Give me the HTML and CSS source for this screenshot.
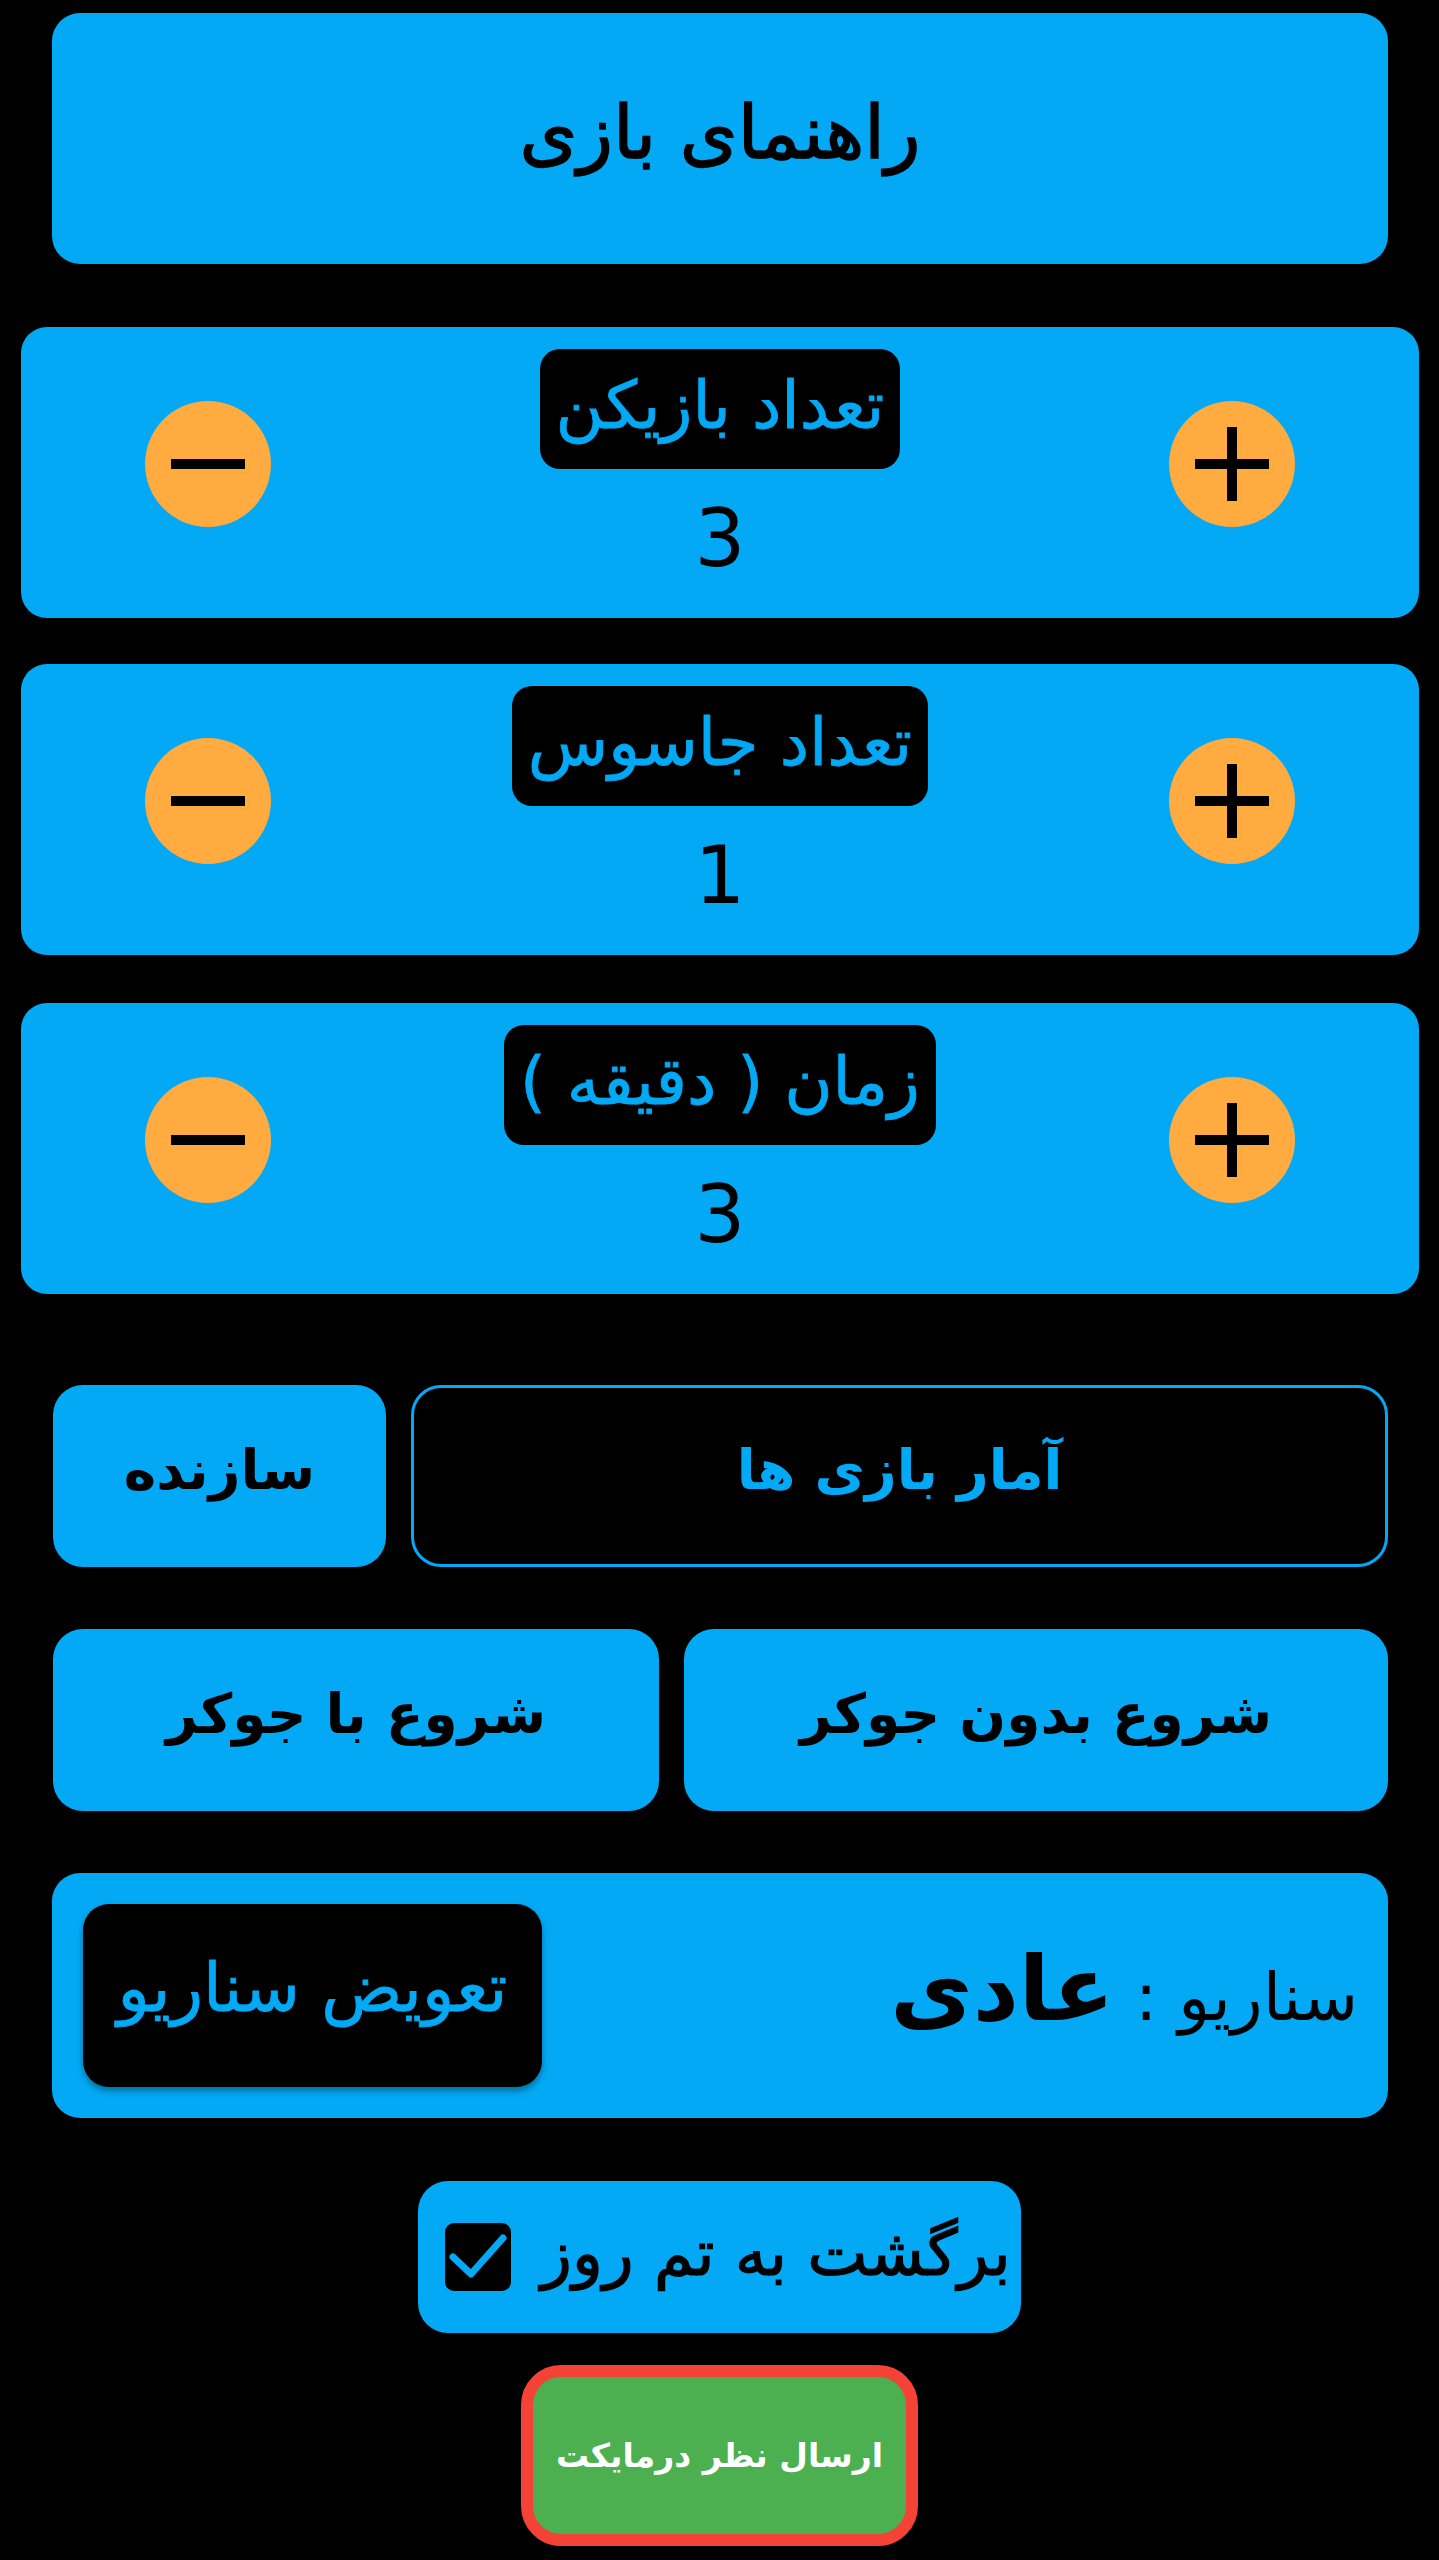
FILE: index.html
```html
<!DOCTYPE html>
<html lang="fa">
<head>
<meta charset="utf-8">
<title>جاسوس</title>
<link rel="stylesheet" href="styles.css">
</head>
<body>
<main class="screen">
  <div class="guide btn-blue"><span class="guide-text" dir="rtl">راهنمای بازی</span></div>

  <section class="counter">
    <div class="round-btn">
      <svg viewBox="0 0 126 126" width="126" height="126"><circle cx="63" cy="63" r="63" fill="#FFAB40"/><rect x="26" y="58" width="74" height="10" fill="#000"/></svg>
    </div>
    <div class="counter-mid">
      <div class="pill" dir="rtl">تعداد بازیکن</div>
      <div class="count">3</div>
    </div>
    <div class="round-btn">
      <svg viewBox="0 0 126 126" width="126" height="126"><circle cx="63" cy="63" r="63" fill="#FFAB40"/><rect x="26" y="58" width="74" height="10" fill="#000"/><rect x="58" y="26" width="10" height="74" fill="#000"/></svg>
    </div>
  </section>

  <section class="counter counter-2">
    <div class="round-btn">
      <svg viewBox="0 0 126 126" width="126" height="126"><circle cx="63" cy="63" r="63" fill="#FFAB40"/><rect x="26" y="58" width="74" height="10" fill="#000"/></svg>
    </div>
    <div class="counter-mid">
      <div class="pill" dir="rtl">تعداد جاسوس</div>
      <div class="count">1</div>
    </div>
    <div class="round-btn">
      <svg viewBox="0 0 126 126" width="126" height="126"><circle cx="63" cy="63" r="63" fill="#FFAB40"/><rect x="26" y="58" width="74" height="10" fill="#000"/><rect x="58" y="26" width="10" height="74" fill="#000"/></svg>
    </div>
  </section>

  <section class="counter counter-3">
    <div class="round-btn">
      <svg viewBox="0 0 126 126" width="126" height="126"><circle cx="63" cy="63" r="63" fill="#FFAB40"/><rect x="26" y="58" width="74" height="10" fill="#000"/></svg>
    </div>
    <div class="counter-mid">
      <div class="pill" dir="rtl">زمان ( دقیقه )</div>
      <div class="count">3</div>
    </div>
    <div class="round-btn">
      <svg viewBox="0 0 126 126" width="126" height="126"><circle cx="63" cy="63" r="63" fill="#FFAB40"/><rect x="26" y="58" width="74" height="10" fill="#000"/><rect x="58" y="26" width="10" height="74" fill="#000"/></svg>
    </div>
  </section>

  <div class="row row-1">
    <div class="btn-blue tile"><span class="tile-text" dir="rtl">سازنده</span></div>
    <div class="tile tile-outline"><span class="tile-text" dir="rtl">آمار بازی ها</span></div>
  </div>

  <div class="row row-2">
    <div class="btn-blue tile"><span class="tile-text" dir="rtl">شروع با جوکر</span></div>
    <div class="btn-blue tile"><span class="tile-text" dir="rtl">شروع بدون جوکر</span></div>
  </div>

  <section class="scenario">
    <div class="swap-btn"><span class="swap-text" dir="rtl">تعویض سناریو</span></div>
    <div class="scenario-label" dir="rtl">سناریو : <b class="scenario-name">عادی</b></div>
  </section>

  <div class="theme-toggle">
    <span class="check-box">
      <svg viewBox="0 0 66 68" width="66" height="68"><path d="M8 34 L26 51 L58 15" fill="none" stroke="#03A9F4" stroke-width="7" stroke-linecap="round" stroke-linejoin="round"/></svg>
    </span>
    <span class="toggle-text" dir="rtl">برگشت به تم روز</span>
  </div>

  <div class="feedback"><span class="feedback-text" dir="rtl">ارسال نظر درمایکت</span></div>
</main>
</body>
</html>
```

FILE: styles.css
```css
html, body {
  margin: 0;
  padding: 0;
  background: #000;
}

body {
  font-family: "DejaVu Sans", sans-serif;
  color: #000;
}

.screen {
  display: flex;
  flex-direction: column;
  padding-top: 13px;
  min-height: 2547px;
}

.btn-blue {
  background: #03A9F4;
}

.guide {
  margin: 0 51px 0 52px;
  height: 251px;
  border-radius: 28px;
  display: flex;
  align-items: center;
  justify-content: center;
}

.guide-text {
  font-size: 74px;
  line-height: 1;
  padding-bottom: 14px;
  white-space: nowrap;
  -webkit-text-stroke: 1.5px #000;
}

.counter {
  margin: 63px 20px 0 21px;
  background: #03A9F4;
  border-radius: 26px;
  display: flex;
  align-items: center;
  justify-content: space-between;
  padding: 22px 124px 39px 124px;
}

.counter-2 {
  margin-top: 46px;
}

.counter-3 {
  margin-top: 48px;
}

.round-btn {
  width: 126px;
  height: 126px;
  display: flex;
}

.round-btn svg {
  display: block;
}

.counter-mid {
  display: flex;
  flex-direction: column;
  align-items: center;
}

.pill {
  background: #000;
  color: #03A9F4;
  font-size: 66px;
  line-height: 66px;
  height: 66px;
  padding: 24px 16px 30px;
  border-radius: 20px;
  white-space: nowrap;
  -webkit-text-stroke: 0.8px #03A9F4;
}

.count {
  margin-top: 30px;
  font-size: 80px;
  line-height: 80px;
  height: 80px;
}

.row {
  display: grid;
  gap: 25px;
  margin: 0 51px 0 53px;
  height: 182px;
}

.row-1 {
  margin-top: 91px;
  grid-template-columns: 333px 1fr;
}

.row-2 {
  margin-top: 62px;
  grid-template-columns: 606px 1fr;
}

.tile {
  border-radius: 30px;
  display: flex;
  align-items: center;
  justify-content: center;
}

.tile-outline {
  background: #000;
  border: 3px solid #03A9F4;
}

.tile-text {
  font-size: 55px;
  font-weight: bold;
  line-height: 1;
  padding-bottom: 12px;
  white-space: nowrap;
}

.tile-outline .tile-text {
  color: #03A9F4;
}

.scenario {
  margin: 62px 51px 0 52px;
  height: 245px;
  background: #03A9F4;
  border-radius: 28px;
  display: flex;
  align-items: center;
  justify-content: space-between;
  padding: 0 30px 0 31px;
  box-sizing: border-box;
}

.swap-btn {
  width: 459px;
  height: 183px;
  background: #000;
  border-radius: 26px;
  box-shadow: 0 4px 6px rgba(0, 0, 0, 0.35);
  display: flex;
  align-items: center;
  justify-content: center;
}

.swap-text {
  color: #03A9F4;
  font-size: 67px;
  line-height: 1;
  padding-bottom: 14px;
  white-space: nowrap;
  -webkit-text-stroke: 0.8px #03A9F4;
}

.scenario-label {
  font-size: 66px;
  line-height: 1;
  white-space: nowrap;
  padding-bottom: 14px;
}

.scenario-name {
  font-size: 90px;
  font-weight: bold;
}

.theme-toggle {
  align-self: center;
  margin-top: 63px;
  width: 603px;
  height: 152px;
  box-sizing: border-box;
  background: #03A9F4;
  border-radius: 30px;
  display: flex;
  align-items: center;
  padding: 0 9px 0 27px;
  gap: 30px;
}

.check-box {
  width: 66px;
  height: 68px;
  background: #000;
  border-radius: 9px;
  display: flex;
  flex: none;
}

.toggle-text {
  font-size: 64px;
  line-height: 1;
  white-space: nowrap;
  padding-bottom: 8px;
  -webkit-text-stroke: 1.2px #000;
}

.feedback {
  align-self: center;
  margin-top: 32px;
  width: 397px;
  height: 181px;
  box-sizing: border-box;
  background: #4CAF50;
  border: 12px solid #F44336;
  border-radius: 40px;
  display: flex;
  align-items: center;
  justify-content: center;
}

.feedback-text {
  color: #fff;
  font-size: 33px;
  font-weight: bold;
  line-height: 1;
  white-space: nowrap;
}
```
